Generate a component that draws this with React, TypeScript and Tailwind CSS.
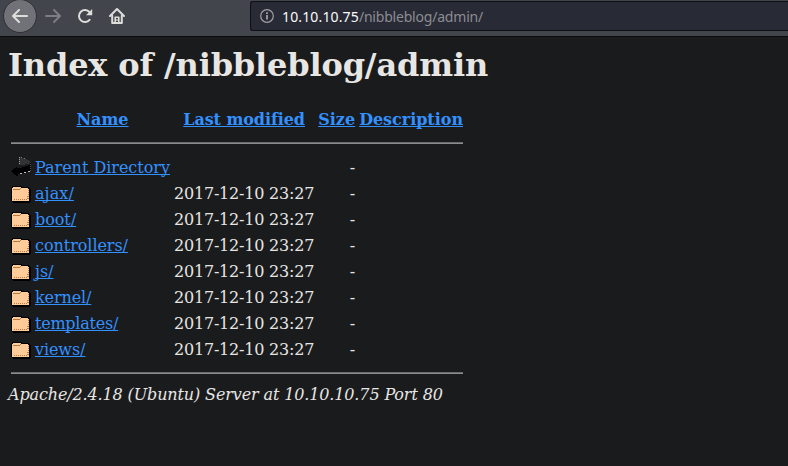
const FOLDERS = [
  { name: "ajax/", tracking: "tracking-[0.08px]" },
  { name: "boot/", tracking: "tracking-[-0.05px]" },
  { name: "controllers/", tracking: "tracking-[-0.05px]" },
  { name: "js/", tracking: "tracking-[-0.05px]" },
  { name: "kernel/", tracking: "tracking-[-0.12px]" },
  { name: "templates/", tracking: "tracking-[-0.24px]" },
  { name: "views/", tracking: "tracking-[-0.1px]" },
];

const LINK = "text-[#3391ff] underline [text-decoration-skip-ink:none]";

function BackIcon() {
  return (
    <svg viewBox="0 0 16 16" className="block h-4 w-4" fill="none" stroke="currentColor" strokeWidth="2" strokeLinecap="round" strokeLinejoin="round">
      <path d="M15 8H1.5M7 2L1 8l6 6" />
    </svg>
  );
}

function ReloadIcon() {
  return (
    <svg viewBox="0 0 16 16" className="block h-4 w-4" fill="none" stroke="currentColor" strokeWidth="2" strokeLinecap="round">
      <path d="M12.6 11.8A6 6 0 1 1 12.5 4" />
      <path d="M15.2 1v6.2H9z" fill="currentColor" stroke="none" />
    </svg>
  );
}

function HomeIcon() {
  return (
    <svg viewBox="0 0 16 16" className="block h-4 w-4" fill="none" stroke="currentColor" strokeWidth="2" strokeLinecap="round" strokeLinejoin="round">
      <path d="M1 8l7-7 7 7" />
      <path d="M3.2 7.5V15h9.6V7.5" />
      <path d="M6.2 14.5V9.2h3.6v5.3" strokeWidth="1.6" />
      <path d="M8 11.5v1" strokeWidth="1.2" />
    </svg>
  );
}

function InfoIcon() {
  return (
    <svg viewBox="0 0 14 14" className="block h-3.5 w-3.5 shrink-0" fill="none" stroke="#a0a1a7">
      <circle cx="7" cy="7" r="6.3" strokeWidth="1.2" />
      <path d="M7 6v4.6M7 3.3v1.7" strokeWidth="1.8" />
    </svg>
  );
}

function FolderIcon() {
  return (
    <svg viewBox="0 0 20 22" className="block h-[22px] w-5" shapeRendering="crispEdges">
      <path d="M1 4h10v1h7v1h1v1h1v13h-1v1H2v-1H1v-1H0V6h1z" fill="#000" />
      <path d="M1 6h1V5h8v1h7v1h1v12H1z" fill="#ffcc99" />
      <path d="M2 7.5h7M9 6.5h1" stroke="#b07c4a" />
      <path d="M3 17.5h14" stroke="#b07c4a" strokeDasharray="1 1" />
      <path d="M16.5 14v4M17.5 8v10" stroke="#b07c4a" strokeDasharray="1 1" />
    </svg>
  );
}

function ParentIcon() {
  return (
    <svg viewBox="0 0 20 22" className="block h-[22px] w-5" shapeRendering="crispEdges">
      <path d="M8 1h3v1h3v1h2v1h2v1h1v1h1v1h-2v1h-4v1H8z" fill="#333" />
      <path d="M0 15h1v-1h1v-1h1v-1h2v-1h1v1h5v-1h3v-1h3V9h2V7h1v8h-2v1h-3v1h-4v1H7v2H5v-1H4v-1H2v-2H0z" fill="#000" />
      <path d="M8.5 1v7" stroke="#999" strokeDasharray="1 1" />
      <path d="M19.5 8v7" stroke="#555" strokeDasharray="1 1" />
      <path d="M9 17.5h3M13 16.5h3M17 15.5h2" stroke="#bbb" strokeDasharray="2 1" />
      <path d="M10 1.5h1M13 2.5h1" stroke="#777" />
    </svg>
  );
}

function Rule() {
  return (
    <tr>
      <th colSpan={5} className="p-px">
        <hr className="my-2 h-0.5 border-0 border-t border-b border-t-[#6c6c6c] border-b-[#8c8c8c]" />
      </th>
    </tr>
  );
}

export default function App() {
  return (
    <div className="flex h-[466px] w-[788px] flex-col overflow-hidden bg-[#1a1b1d] [font-family:'DejaVu_Serif',serif] text-base leading-[19px] text-[#e8e6e3]">
      <header className="flex h-[37px] shrink-0 items-start border-b border-[#0b0c0e] bg-[#43454c] text-[#deddda]">
        <div className="ml-[3px] -mt-px flex h-[34px] w-[34px] shrink-0 items-center justify-center rounded-full border border-[#2e2f33] bg-[#717277]">
          <BackIcon />
        </div>
        <div className="mt-2 ml-2 shrink-0 -scale-x-100 text-[#7d7e82]"><BackIcon /></div>
        <div className="mt-2 ml-4 shrink-0"><ReloadIcon /></div>
        <div className="mt-2 ml-4 shrink-0"><HomeIcon /></div>
        <div className="mt-px ml-[125px] flex h-[30px] flex-1 items-center rounded-l-[3px] border border-r-0 border-[#0e0f12] bg-[#282a35] pl-[9px]">
          <InfoIcon />
          <span className="ml-2 whitespace-nowrap [font-family:'Noto_Sans',sans-serif] text-[14px] tracking-[-0.2px] text-[#8c8d93]">
            <span className="tracking-[0.14px] text-[#fafafa]">10.10.10.75</span>/nibbleblog/admin/
          </span>
        </div>
      </header>
      <main className="px-2 pt-[9px]">
        <h1 className="mb-[21px] text-[32px] leading-[38px] font-bold tracking-[-0.16px]">Index of /nibbleblog/admin</h1>
        <table className="border-separate border-spacing-0.5 whitespace-nowrap">
          <tbody>
            <tr className="h-6">
              <th className="p-px" />
              <th className="p-px"><a className={LINK}>Name</a></th>
              <th className="p-px tracking-[-0.08px]"><a className={LINK}>Last modified</a></th>
              <th className="p-px"><a className={LINK}>Size</a></th>
              <th className="p-px tracking-[-0.04px]"><a className={LINK}>Description</a></th>
            </tr>
            <Rule />
            <tr>
              <td className="p-px"><ParentIcon /></td>
              <td className="p-px tracking-[-0.02px]"><a className={LINK}>Parent Directory</a></td>
              <td className="p-px" />
              <td className="p-px text-right">-</td>
              <td className="p-px" />
            </tr>
            {FOLDERS.map(({ name, tracking }) => (
              <tr key={name}>
                <td className="p-px"><FolderIcon /></td>
                <td className="p-px"><a className={`${LINK} ${tracking}`}>{name}</a></td>
                <td className="p-px text-right tracking-[-0.2px]">2017-12-10 23:27</td>
                <td className="p-px text-right">-</td>
                <td className="p-px" />
              </tr>
            ))}
            <Rule />
          </tbody>
        </table>
        <address className="tracking-[-0.13px] whitespace-nowrap italic">Apache/2.4.18 (Ubuntu) Server at 10.10.10.75 Port 80</address>
      </main>
    </div>
  );
}
